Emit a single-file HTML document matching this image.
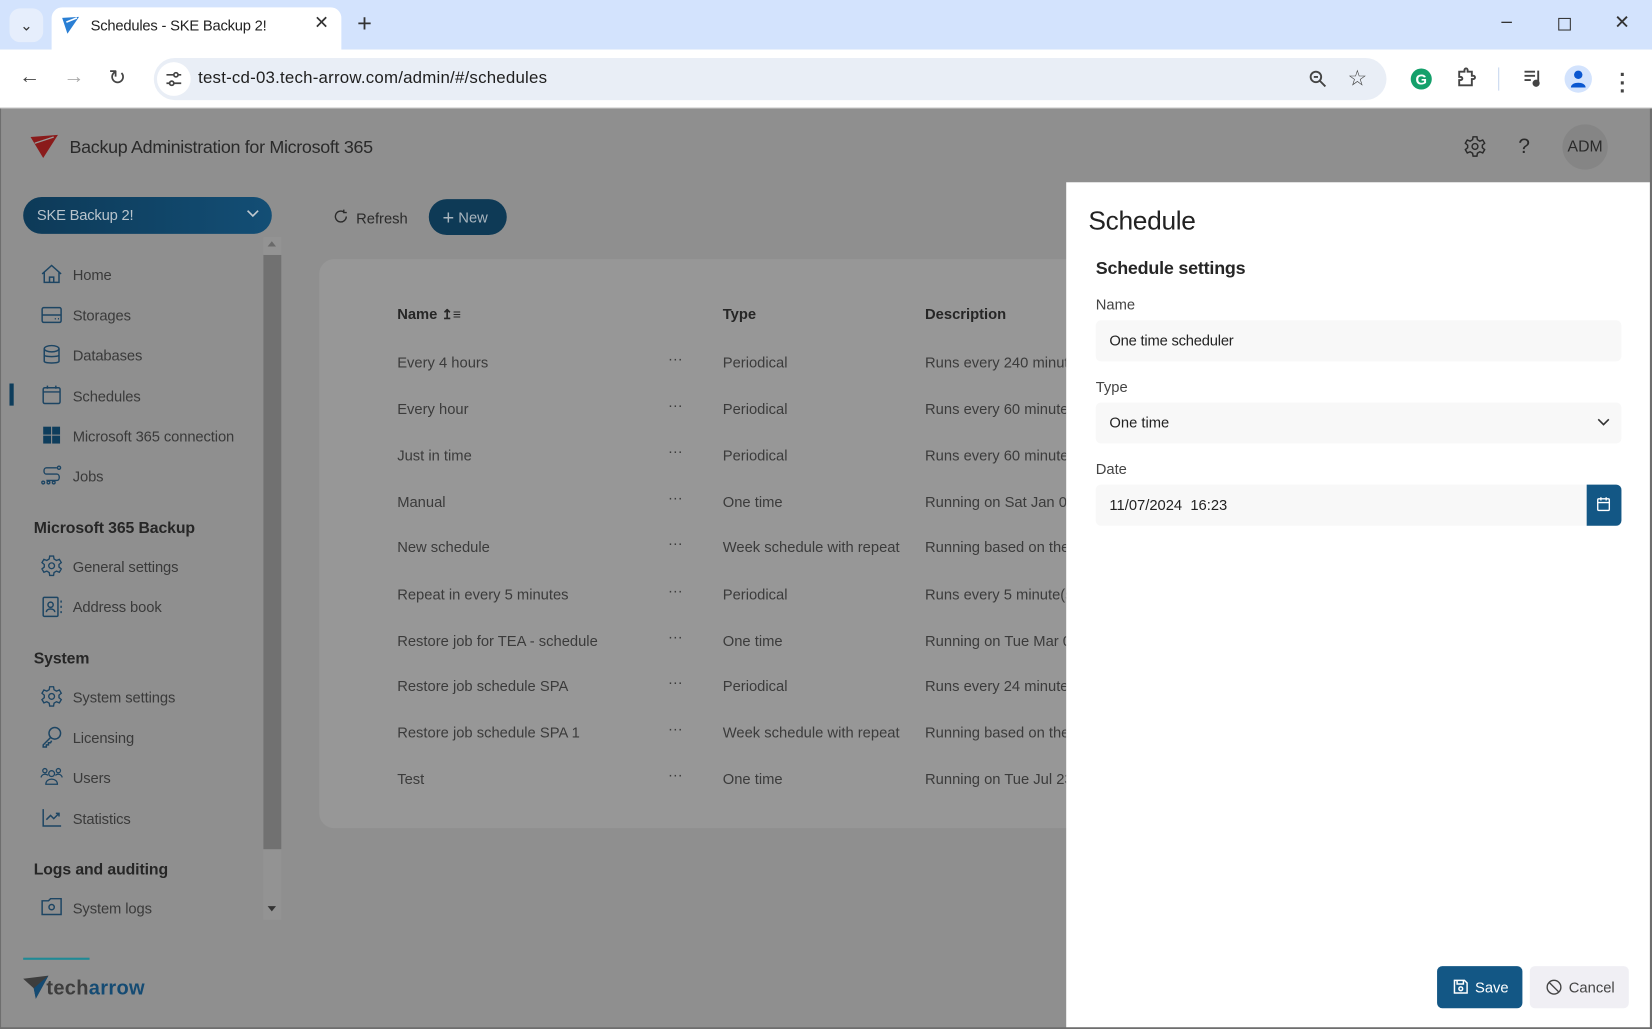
<!DOCTYPE html>
<html><head><meta charset="utf-8"><style>
*{box-sizing:border-box;margin:0;padding:0}
html,body{width:1652px;height:1029px;overflow:hidden;background:#8f8f8f;font-family:"Liberation Sans",sans-serif}
#w{position:absolute;left:0;top:0;width:1568px;height:977px;transform:scale(1.05357);transform-origin:0 0;background:#8f8f8f;color:#333}
.a{position:absolute}
.tabs{left:0;top:0;width:1568px;height:47px;background:#d3e3fd}
.tool{left:0;top:47px;width:1568px;height:56px;background:#fff;border-bottom:1px solid #c8c8c8}
.omni{left:146px;top:55px;width:1170px;height:40px;border-radius:20px;background:#e9eef6}
.nav{font-size:14px;color:#3a3a3a;letter-spacing:-0.1px}
.nav .i{position:absolute;left:38px;width:22px;height:22px}
.nav span{position:absolute;left:69px}
.sec{font-size:15px;font-weight:bold;color:#262626;left:32px}
.row{font-size:14px;color:#3b3b3b}
.rows .row{margin-top:2px}
svg{overflow:visible}
</style></head><body><div id="w">
<div class="a tabs"></div>
<div class="a" style="left:9px;top:8px;width:32px;height:32px;border-radius:10px;background:#e6eefc;font-size:14px;text-align:center;line-height:32px;color:#333">&#8964;</div>
<div class="a" style="left:49px;top:7px;width:275px;height:42px;background:#fff;border-radius:10px 10px 0 0"></div>
<svg class="a" style="left:58px;top:15px" width="18" height="18" viewBox="0 0 18 18"><path d="M1 2L17 1L6 17Z" fill="#2a7fd4"/><path d="M5 6L15 2" stroke="#fff" stroke-width="1.5"/></svg>
<div class="a" style="left:86px;top:16px;font-size:14px;color:#222;letter-spacing:-0.2px">Schedules - SKE Backup 2!</div>
<div class="a" style="left:298px;top:12px;font-size:17px;color:#333">&#10005;</div>
<div class="a" style="left:339px;top:9px;font-size:24px;color:#333">+</div>
<div class="a" style="left:1425px;top:10px;font-size:18px;color:#333">&#8211;</div>
<div class="a" style="left:1479px;top:17px;width:12px;height:12px;border:1.5px solid #333"></div>
<div class="a" style="left:1532px;top:11px;font-size:18px;color:#333">&#10005;</div>
<div class="a tool"></div>
<div class="a" style="left:18px;top:62px;font-size:20px;color:#444">&#8592;</div>
<div class="a" style="left:60px;top:62px;font-size:20px;color:#aaa">&#8594;</div>
<div class="a" style="left:103px;top:61px;font-size:20px;color:#444">&#8635;</div>
<div class="a omni"></div>
<div class="a" style="left:149px;top:59px;width:32px;height:32px;border-radius:16px;background:#fff"></div>
<svg class="a" style="left:156px;top:66px" width="18" height="18" viewBox="0 0 18 18" fill="none" stroke="#444" stroke-width="1.6"><path d="M2 5H9M13 5H16M2 13H5M9 13H16"/><circle cx="11" cy="5" r="2"/><circle cx="7" cy="13" r="2"/></svg>
<div class="a" style="left:188px;top:66px;font-size:16px;color:#1f1f1f;letter-spacing:0.2px">test-cd-03.tech-arrow.com/admin/#/schedules</div>
<svg class="a" style="left:1242px;top:66px" width="18" height="18" viewBox="0 0 18 18" fill="none" stroke="#444" stroke-width="1.8"><circle cx="7" cy="7" r="5"/><path d="M11 11L16 16M5 7H9"/></svg>
<div class="a" style="left:1279px;top:62px;font-size:21px;color:#444">&#9734;</div>
<div class="a" style="left:1339px;top:65px;width:20px;height:20px;border-radius:10px;background:#15a06b;color:#fff;font-weight:bold;font-size:14px;text-align:center;line-height:20px">G</div>
<svg class="a" style="left:1382px;top:64px" width="20" height="20" viewBox="0 0 20 20" fill="none" stroke="#444" stroke-width="1.8"><path d="M3 4H8V2.5A1.5 1.5 0 0 1 11 2.5V4H15V8H16.5A1.5 1.5 0 0 1 16.5 11H15V17H3V12H4.5A1.5 1.5 0 0 0 4.5 9H3Z"/></svg>
<div class="a" style="left:1422px;top:64px;width:1px;height:22px;background:#c7d6ee"></div>
<svg class="a" style="left:1445px;top:64px" width="20" height="20" viewBox="0 0 20 20" stroke="#444" stroke-width="1.8"><path d="M2 4H12M2 8H12M2 12H8M15 3V14"/><circle cx="13" cy="15" r="2.5" fill="#444"/></svg>
<div class="a" style="left:1485px;top:62px;width:26px;height:26px;border-radius:13px;background:#d3e3fd"></div>
<svg class="a" style="left:1488px;top:64px" width="20" height="22" viewBox="0 0 20 22"><circle cx="10" cy="7" r="4" fill="#0b57d0"/><path d="M3 19C3 13 17 13 17 19Z" fill="#0b57d0"/></svg>
<div class="a" style="left:1537px;top:62px;font-size:20px;color:#444;font-weight:bold;line-height:8px">.<br>.<br>.</div>

<svg class="a" style="left:29px;top:128px" width="26" height="22" viewBox="0 0 26 22"><path d="M0 2L26 0L12 22Z" fill="#8a1b1b"/><path d="M4 8L22 2" stroke="#9a9a9a" stroke-width="1.3"/></svg>
<div class="a" style="left:66px;top:130px;font-size:17px;color:#2a2a2a;letter-spacing:-0.3px">Backup Administration for Microsoft 365</div>
<svg class="a" style="left:1389px;top:128px" width="22" height="22" viewBox="0 0 24 24" fill="none" stroke="#2a2a2a" stroke-width="1.5"><circle cx="12" cy="12" r="3"/><path d="M10 2H14L14.5 5L17 6.5L20 5.3L22 8.7L19.6 10.7V13.3L22 15.3L20 18.7L17 17.5L14.5 19L14 22H10L9.5 19L7 17.5L4 18.7L2 15.3L4.4 13.3V10.7L2 8.7L4 5.3L7 6.5L9.5 5Z"/></svg>
<div class="a" style="left:1441px;top:128px;font-size:20px;color:#2a2a2a">?</div>
<div class="a" style="left:1483px;top:118px;width:43px;height:43px;border-radius:22px;background:#858585;font-size:15px;color:#2a2a2a;text-align:center;line-height:43px">ADM</div>

<div class="a" style="left:22px;top:187px;width:236px;height:35px;border-radius:18px;background:linear-gradient(90deg,#0d3a58,#134e75);color:#b9c4cc;font-size:14px;line-height:35px;padding-left:13px;letter-spacing:-0.2px">SKE Backup 2!</div>
<svg class="a" style="left:233px;top:198px" width="14" height="10" viewBox="0 0 14 10" fill="none" stroke="#c0c8cf" stroke-width="1.6"><path d="M2 2L7 7L12 2"/></svg>
<div class="a" style="left:250px;top:225px;width:17px;height:648px;background:#939393"></div>
<div class="a" style="left:250px;top:242px;width:17px;height:564px;background:#717171"></div>
<div class="a" style="left:254px;top:229px;width:0;height:0;border-left:4px solid transparent;border-right:4px solid transparent;border-bottom:5px solid #6a6a6a"></div>
<div class="a" style="left:254px;top:860px;width:0;height:0;border-left:4px solid transparent;border-right:4px solid transparent;border-top:5px solid #333"></div>
<div class="a" style="left:9px;top:364px;width:4px;height:21px;background:#0e3d5c"></div>

<div class="a nav" style="left:0;top:0;width:250px;height:900px">
 <svg class="i" style="top:249px" viewBox="0 0 22 22" fill="none" stroke="#1d4563" stroke-width="1.4"><path d="M2 11L11 3L20 11M4 9V19H18V9M9 19V14H13V19"/></svg><span style="top:253px">Home</span>
 <svg class="i" style="top:288px" viewBox="0 0 22 22" fill="none" stroke="#1d4563" stroke-width="1.4"><rect x="2" y="4" width="18" height="14" rx="1.5"/><path d="M2 11H20M14 14.5H15M17 14.5H18"/></svg><span style="top:291px">Storages</span>
 <svg class="i" style="top:326px" viewBox="0 0 22 22" fill="none" stroke="#1d4563" stroke-width="1.4"><ellipse cx="11" cy="5" rx="7" ry="3"/><path d="M4 5V17C4 19 18 19 18 17V5M4 11C4 13 18 13 18 11"/></svg><span style="top:329px">Databases</span>
 <svg class="i" style="top:364px" viewBox="0 0 22 22" fill="none" stroke="#1d4563" stroke-width="1.4"><rect x="3" y="4" width="16" height="15" rx="1.5"/><path d="M3 8H19M7 2V5M15 2V5"/></svg><span style="top:368px">Schedules</span>
 <svg class="i" style="top:402px" viewBox="0 0 22 22" fill="#0e3d5c"><rect x="3" y="3" width="7.5" height="7.5"/><rect x="11.5" y="3" width="7.5" height="7.5"/><rect x="3" y="11.5" width="7.5" height="7.5"/><rect x="11.5" y="11.5" width="7.5" height="7.5"/></svg><span style="top:406px">Microsoft 365 connection</span>
 <svg class="i" style="top:440px" viewBox="0 0 22 22" fill="none" stroke="#1d4563" stroke-width="1.3"><path d="M16 4H6C3 4 3 10 6 10H16C19 10 19 16 16 16H6"/><circle cx="18" cy="4" r="1.5"/><circle cx="3" cy="18" r="1.3"/><circle cx="8" cy="18" r="1.3"/><circle cx="13" cy="18" r="1.3"/></svg><span style="top:444px">Jobs</span>
 <div class="a sec" style="top:493px">Microsoft 365 Backup</div>
 <svg class="i" style="top:526px" viewBox="0 0 24 24" fill="none" stroke="#1d4563" stroke-width="1.4"><circle cx="12" cy="12" r="3"/><path d="M10 2H14L14.5 5L17 6.5L20 5.3L22 8.7L19.6 10.7V13.3L22 15.3L20 18.7L17 17.5L14.5 19L14 22H10L9.5 19L7 17.5L4 18.7L2 15.3L4.4 13.3V10.7L2 8.7L4 5.3L7 6.5L9.5 5Z"/></svg><span style="top:530px">General settings</span>
 <svg class="i" style="top:565px" viewBox="0 0 22 22" fill="none" stroke="#1d4563" stroke-width="1.4"><rect x="3" y="2" width="14" height="18" rx="1"/><circle cx="10" cy="9" r="2.5"/><path d="M6 16C6 12 14 12 14 16M20 5V7M20 10V12M20 15V17"/></svg><span style="top:568px">Address book</span>
 <div class="a sec" style="top:617px">System</div>
 <svg class="i" style="top:650px" viewBox="0 0 24 24" fill="none" stroke="#1d4563" stroke-width="1.4"><circle cx="12" cy="12" r="3"/><path d="M10 2H14L14.5 5L17 6.5L20 5.3L22 8.7L19.6 10.7V13.3L22 15.3L20 18.7L17 17.5L14.5 19L14 22H10L9.5 19L7 17.5L4 18.7L2 15.3L4.4 13.3V10.7L2 8.7L4 5.3L7 6.5L9.5 5Z"/></svg><span style="top:654px">System settings</span>
 <svg class="i" style="top:688px" viewBox="0 0 22 22" fill="none" stroke="#1d4563" stroke-width="1.4"><circle cx="14" cy="8" r="5.5"/><path d="M10 12L3 19V21H6V19H8V17H10L11 15"/></svg><span style="top:692px">Licensing</span>
 <svg class="i" style="top:726px" viewBox="0 0 24 22" fill="none" stroke="#1d4563" stroke-width="1.3"><circle cx="12" cy="8" r="3"/><circle cx="5" cy="5" r="2.2"/><circle cx="19" cy="5" r="2.2"/><path d="M6 19C6 12 18 12 18 19Z M1 12C2 8 7 8 8 10M23 12C22 8 17 8 16 10"/></svg><span style="top:730px">Users</span>
 <svg class="i" style="top:765px" viewBox="0 0 22 22" fill="none" stroke="#1d4563" stroke-width="1.4"><path d="M3 3V19H20M6 13L10 9L13 12L18 7M15 7H18V10"/></svg><span style="top:769px">Statistics</span>
 <div class="a sec" style="top:817px">Logs and auditing</div>
 <svg class="i" style="top:850px" viewBox="0 0 22 22" fill="none" stroke="#1d4563" stroke-width="1.4"><path d="M2 5H8L10 3H20V18H2Z"/><circle cx="11" cy="11" r="2.5"/></svg><span style="top:854px">System logs</span>
</div>
<div class="a" style="left:22px;top:909px;width:63px;height:2px;background:#1f8a96"></div>
<svg class="a" style="left:22px;top:926px" width="26" height="24" viewBox="0 0 26 24"><path d="M0 3L24 0L12 22L10 12Z" fill="#3d3d3d"/><path d="M24 0L10 12L12 22Z" fill="#144a72"/></svg>
<div class="a" style="left:44px;top:928px;font-size:19px;font-weight:bold;letter-spacing:0.3px"><span style="color:#3d3d3d">tech</span><span style="color:#154b73">arrow</span></div>

<svg class="a" style="left:316px;top:198px" width="15" height="15" viewBox="0 0 16 16" fill="none" stroke="#2a2a2a" stroke-width="1.4"><path d="M13.5 8A5.5 5.5 0 1 1 11 3.4M11 1V4H14"/></svg>
<div class="a" style="left:338px;top:199px;font-size:14px;color:#2a2a2a">Refresh</div>
<div class="a" style="left:407px;top:189px;width:74px;height:34px;border-radius:17px;background:#0e3a56;color:#a9b5be;font-size:14px;line-height:34px;padding-left:13px"><span style="font-size:19px;vertical-align:-2px">+</span> New</div>

<div class="a" style="left:303px;top:246px;width:760px;height:540px;border-radius:14px;background:#979797"></div>
<div class="a row" style="left:377px;top:290px;font-weight:bold;color:#262626">Name <span style="font-size:13px">&#8613;&#8801;</span></div>
<div class="a row" style="left:686px;top:290px;font-weight:bold;color:#262626">Type</div>
<div class="a row" style="left:878px;top:290px;font-weight:bold;color:#262626">Description</div>
<div class="a rows" style="left:0;top:0;width:1012px;height:977px;overflow:hidden">
<div class="a row" style="left:377px;top:334px">Every 4 hours</div><div class="a row" style="left:634px;top:330px">···</div><div class="a row" style="left:686px;top:334px">Periodical</div><div class="a row" style="left:878px;top:334px;white-space:nowrap">Runs every 240 minutes</div>
<div class="a row" style="left:377px;top:378px">Every hour</div><div class="a row" style="left:634px;top:374px">···</div><div class="a row" style="left:686px;top:378px">Periodical</div><div class="a row" style="left:878px;top:378px;white-space:nowrap">Runs every 60 minutes</div>
<div class="a row" style="left:377px;top:422px">Just in time</div><div class="a row" style="left:634px;top:418px">···</div><div class="a row" style="left:686px;top:422px">Periodical</div><div class="a row" style="left:878px;top:422px;white-space:nowrap">Runs every 60 minutes</div>
<div class="a row" style="left:377px;top:466px">Manual</div><div class="a row" style="left:634px;top:462px">···</div><div class="a row" style="left:686px;top:466px">One time</div><div class="a row" style="left:878px;top:466px;white-space:nowrap">Running on Sat Jan 01</div>
<div class="a row" style="left:377px;top:509px">New schedule</div><div class="a row" style="left:634px;top:505px">···</div><div class="a row" style="left:686px;top:509px">Week schedule with repeat</div><div class="a row" style="left:878px;top:509px;white-space:nowrap">Running based on the</div>
<div class="a row" style="left:377px;top:554px">Repeat in every 5 minutes</div><div class="a row" style="left:634px;top:550px">···</div><div class="a row" style="left:686px;top:554px">Periodical</div><div class="a row" style="left:878px;top:554px;white-space:nowrap">Runs every 5 minute(s)</div>
<div class="a row" style="left:377px;top:598px">Restore job for TEA - schedule</div><div class="a row" style="left:634px;top:594px">···</div><div class="a row" style="left:686px;top:598px">One time</div><div class="a row" style="left:878px;top:598px;white-space:nowrap">Running on Tue Mar 0</div>
<div class="a row" style="left:377px;top:641px">Restore job schedule SPA</div><div class="a row" style="left:634px;top:637px">···</div><div class="a row" style="left:686px;top:641px">Periodical</div><div class="a row" style="left:878px;top:641px;white-space:nowrap">Runs every 24 minutes</div>
<div class="a row" style="left:377px;top:685px">Restore job schedule SPA 1</div><div class="a row" style="left:634px;top:681px">···</div><div class="a row" style="left:686px;top:685px">Week schedule with repeat</div><div class="a row" style="left:878px;top:685px;white-space:nowrap">Running based on the</div>
<div class="a row" style="left:377px;top:729px">Test</div><div class="a row" style="left:634px;top:725px">···</div><div class="a row" style="left:686px;top:729px">One time</div><div class="a row" style="left:878px;top:729px;white-space:nowrap">Running on Tue Jul 23</div>
</div>

<div class="a" style="left:1012px;top:173px;width:555px;height:804px;background:#fff"></div>
<div class="a" style="left:1566px;top:103px;width:2px;height:874px;background:#6e6e6e"></div>
<div class="a" style="left:0;top:975px;width:1568px;height:2px;background:#6e6e6e"></div>
<div class="a" style="left:0;top:103px;width:1px;height:874px;background:#6e6e6e"></div>
<div class="a" style="left:1033px;top:196px;font-size:25px;color:#222;letter-spacing:-0.3px">Schedule</div>
<div class="a" style="left:1040px;top:245px;font-size:17px;color:#262626;font-weight:bold;letter-spacing:-0.2px">Schedule settings</div>
<div class="a" style="left:1040px;top:281px;font-size:14px;color:#444">Name</div>
<div class="a" style="left:1040px;top:304px;width:499px;height:39px;border-radius:5px;background:#f8f8f8;font-size:14px;color:#222;line-height:39px;padding-left:13px;letter-spacing:-0.2px">One time scheduler</div>
<div class="a" style="left:1040px;top:359px;font-size:14px;color:#444">Type</div>
<div class="a" style="left:1040px;top:382px;width:499px;height:39px;border-radius:5px;background:#f8f8f8;font-size:14px;color:#222;line-height:39px;padding-left:13px">One time</div>
<svg class="a" style="left:1515px;top:396px" width="14" height="10" viewBox="0 0 14 10" fill="none" stroke="#333" stroke-width="1.5"><path d="M2 2L7 7L12 2"/></svg>
<div class="a" style="left:1040px;top:437px;font-size:14px;color:#444">Date</div>
<div class="a" style="left:1040px;top:460px;width:499px;height:39px;border-radius:5px;background:#f8f8f8;font-size:14px;color:#222;line-height:39px;padding-left:13px">11/07/2024&nbsp; 16:23</div>
<div class="a" style="left:1506px;top:460px;width:33px;height:39px;border-radius:0 5px 5px 0;background:#135785"></div>
<svg class="a" style="left:1515px;top:471px" width="14" height="15" viewBox="0 0 14 15" fill="none" stroke="#fff" stroke-width="1.3"><rect x="1.5" y="2.5" width="11" height="11" rx="1"/><path d="M1.5 6H12.5M4.5 1V4M9.5 1V4"/></svg>
<div class="a" style="left:1364px;top:917px;width:81px;height:40px;border-radius:5px;background:#135785;color:#fff;font-size:14px;line-height:40px;padding-left:36px">Save</div>
<svg class="a" style="left:1379px;top:929px" width="15" height="15" viewBox="0 0 15 15" fill="none" stroke="#fff" stroke-width="1.4"><path d="M1.5 1.5H11L13.5 4V13.5H1.5Z M4 1.5V5H10V1.5"/><circle cx="7.5" cy="9.5" r="1.8"/></svg>
<div class="a" style="left:1452px;top:917px;width:94px;height:40px;border-radius:5px;background:#f0eff4;color:#444;font-size:14px;line-height:40px;padding-left:37px">Cancel</div>
<svg class="a" style="left:1467px;top:929px" width="16" height="16" viewBox="0 0 16 16" fill="none" stroke="#444" stroke-width="1.3"><circle cx="8" cy="8" r="6.5"/><path d="M3.5 3.5L12.5 12.5"/></svg>
</div></body></html>
